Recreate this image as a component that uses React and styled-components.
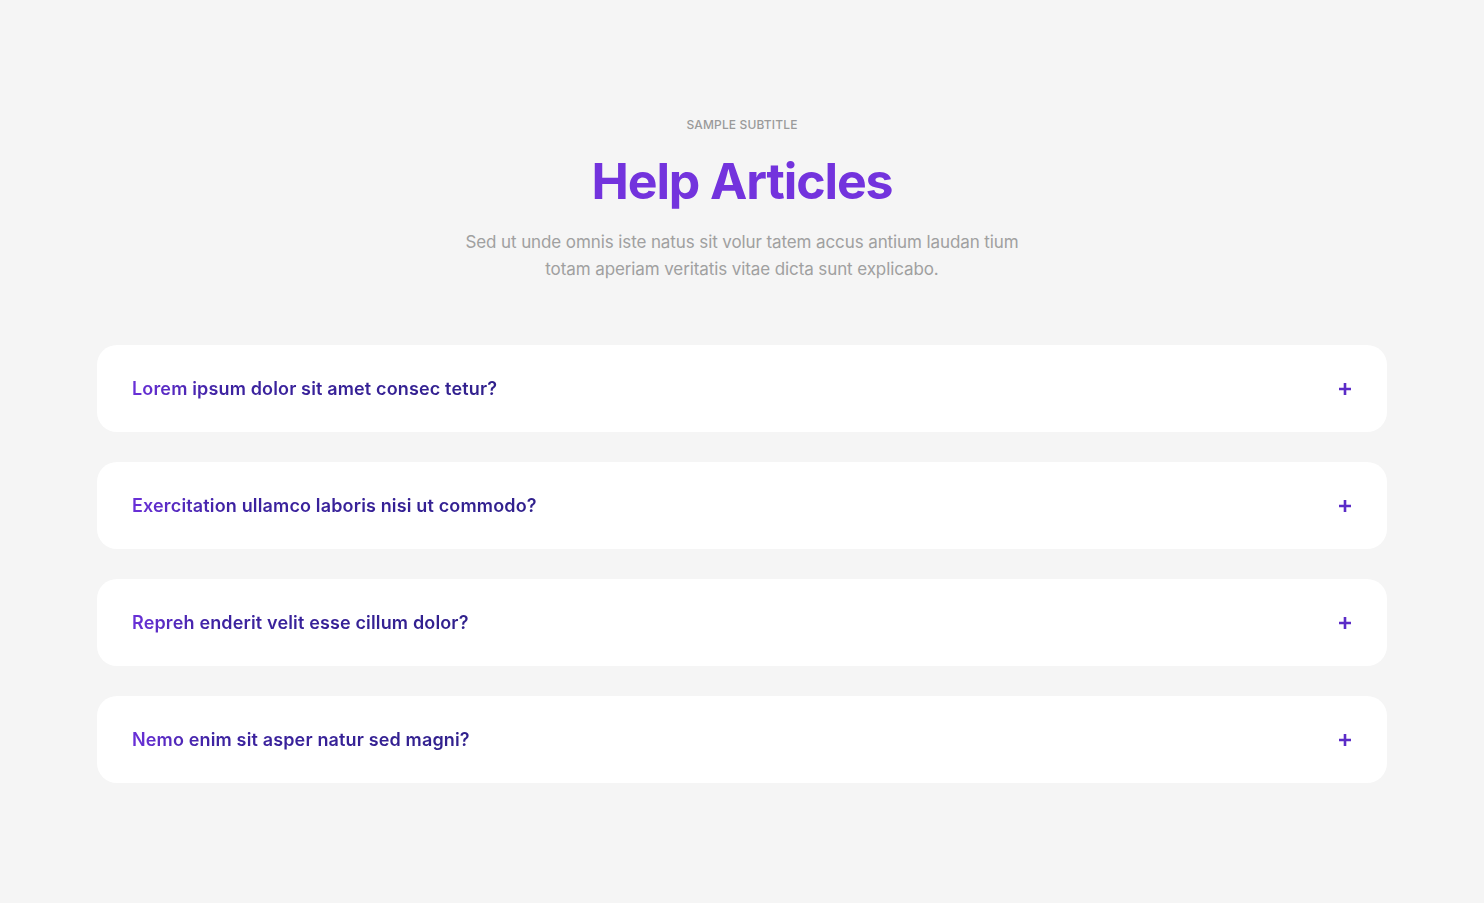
import React from 'react'
import styled, { createGlobalStyle } from 'styled-components'

const GlobalStyle = createGlobalStyle`
  html, body {
    margin: 0;
    padding: 0;
    background: #f5f5f5;
    font-family: Inter, "Noto Sans", sans-serif;
  }
`;

const Section = styled.section`
  min-height: 903px;
  box-sizing: border-box;
  padding: 117px 97px 0;
  display: flex;
  flex-direction: column;
  align-items: center;
`;

const Subtitle = styled.span`
  font-size: 12px;
  font-weight: 500;
  color: #9a9a9a;
  text-transform: uppercase;
  letter-spacing: 0.15px;
  line-height: 16px;
`;

const Title = styled.h2`
  margin: 18px 0 0;
  font-size: 50px;
  line-height: 60px;
  font-weight: 700;
  letter-spacing: -1.1px;
  color: #7333dd;
`;

const Lead = styled.p`
  margin: 18px 0 0;
  max-width: 565px;
  text-align: center;
  font-size: 17px;
  line-height: 27px;
  letter-spacing: -0.1px;
  color: #a0a0a0;
`;

const List = styled.div`
  margin-top: 62px;
  width: 100%;
  display: flex;
  flex-direction: column;
  gap: 30px;
`;

const Card = styled.div`
  background: #fff;
  border-radius: 20px;
  height: 87px;
  box-sizing: border-box;
  padding: 0 35px;
  display: flex;
  align-items: center;
  justify-content: space-between;
  cursor: pointer;
`;

const Question = styled.span`
  font-size: 18px;
  font-weight: 600;
  letter-spacing: 0.15px;
  background: linear-gradient(90deg, #6a30d8 0%, #3c22a0 25%, #30208c 100%);
  -webkit-background-clip: text;
  background-clip: text;
  color: transparent;
`;

const Plus = () => (
  <svg width="14" height="14" viewBox="0 0 14 14">
    <path d="M7 1v12M1 7h12" stroke="#5b2bc7" strokeWidth="2.6" />
  </svg>
);

const questions = [
  'Lorem ipsum dolor sit amet consec tetur?',
  'Exercitation ullamco laboris nisi ut commodo?',
  'Repreh enderit velit esse cillum dolor?',
  'Nemo enim sit asper natur sed magni?',
];

const App = () => (
  <>
    <GlobalStyle />
    <Section>
      <Subtitle>Sample subtitle</Subtitle>
      <Title>Help Articles</Title>
      <Lead>
        Sed ut unde omnis iste natus sit volur tatem accus antium laudan tium totam aperiam veritatis vitae dicta sunt explicabo.
      </Lead>
      <List>
        {questions.map((q) => (
          <Card key={q}>
            <Question>{q}</Question>
            <Plus />
          </Card>
        ))}
      </List>
    </Section>
  </>
);

export default App
